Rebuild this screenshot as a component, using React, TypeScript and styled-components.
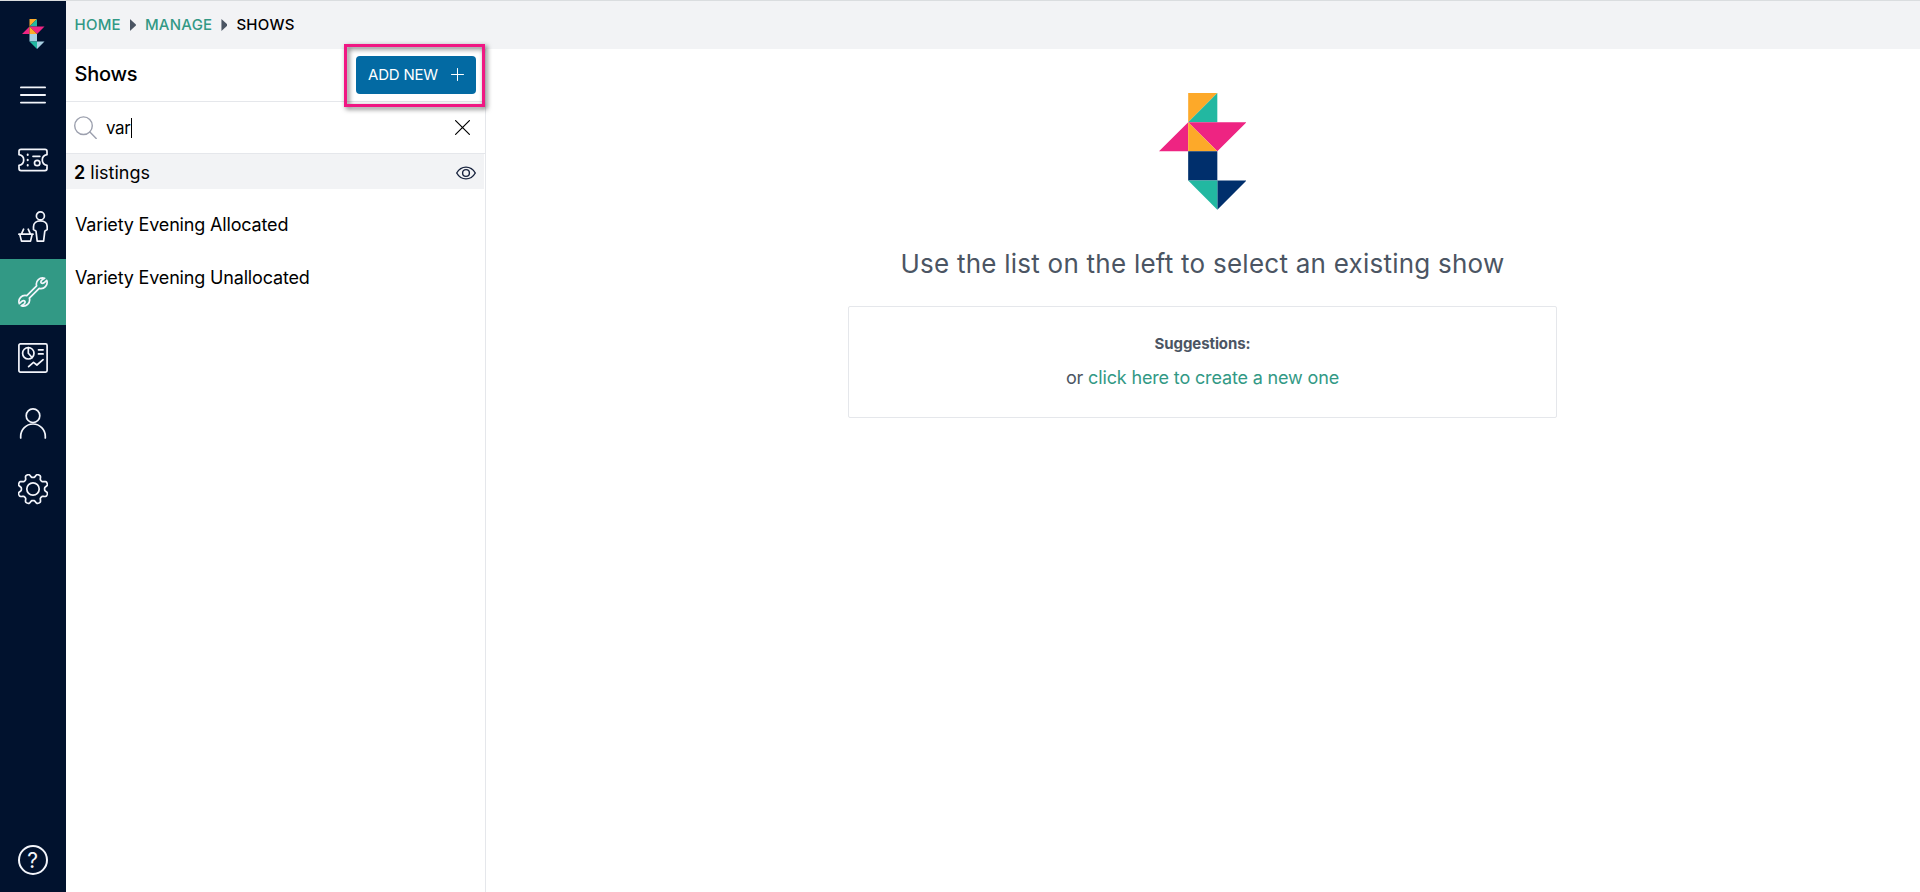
import React from "react";
import styled, { createGlobalStyle } from "styled-components";

const color = {
  navy: "#01122e",
  teal: "#329985",
  blue: "#036aa3",
  pink: "#f01783",
  grey: "#f2f3f5",
  line: "#e5e7eb",
  slate: "#4b5563",
};

const GlobalStyle = createGlobalStyle`
  *, *::before, *::after { box-sizing: border-box; }
  body {
    margin: 0;
    background: #fff;
    color: #000;
    font-family: "Inter", sans-serif;
    font-size: 18px;
    font-weight: 400;
  }
  svg { display: block; flex: none; }
`;

const Page = styled.div`
  display: flex;
  height: 100vh;
  min-height: 600px;
  border-top: 1px solid #dadddf;
  overflow: hidden;
`;

const Sidebar = styled.nav`
  display: flex;
  flex-direction: column;
  flex: none;
  width: 66px;
  background: ${color.navy};
`;

const Brand = styled.a`
  display: flex;
  justify-content: center;
  height: 60px;
  padding: 18px 0 0 1px;
`;

const NavItem = styled.a<{ $active?: boolean }>`
  display: flex;
  align-items: center;
  justify-content: center;
  height: 66px;
  flex: none;
  color: #f3f5fb;
  background: ${(p) => (p.$active ? color.teal : "transparent")};
`;

const MenuItem = styled(NavItem)`
  padding-top: 2px;
`;

const HelpItem = styled(NavItem)`
  height: 64px;
  margin-top: auto;
`;

const HelpMark = styled.span`
  display: flex;
  align-items: center;
  justify-content: center;
  width: 30px;
  height: 30px;
  margin-right: 1px;
  border: 2px solid currentColor;
  border-radius: 50%;
  font-size: 21px;
  font-weight: 400;
  line-height: 1;
`;

const Body = styled.div`
  display: flex;
  flex-direction: column;
  flex: 1;
`;

const Breadcrumbs = styled.header`
  display: flex;
  align-items: center;
  flex: none;
  height: 48px;
  padding: 0 0 2px 8.5px;
  background: ${color.grey};
  font-size: 15px;
  font-weight: 500;
  letter-spacing: 0.25px;
`;

const Crumb = styled.a<{ $link?: boolean }>`
  color: ${(p) => (p.$link ? color.teal : "#000")};
`;

const Arrow = styled.span`
  width: 6px;
  height: 12px;
  margin: 2px 9px 0 9px;
  background: ${color.slate};
  clip-path: polygon(0 0, 100% 45%, 100% 55%, 0 100%);
`;

const Columns = styled.div`
  display: flex;
  flex: 1;
`;

const Panel = styled.aside`
  width: 420px;
  flex: none;
  border-right: 1px solid ${color.line};
`;

const PanelHeader = styled.div`
  display: flex;
  align-items: center;
  justify-content: space-between;
  height: 53px;
  padding: 0 9px 0 8.5px;
  border-bottom: 1px solid ${color.line};
`;

const Title = styled.h1`
  margin: 0;
  padding-bottom: 3px;
  font-size: 20px;
  font-weight: 500;
  letter-spacing: -0.25px;
`;

const ButtonWrap = styled.div`
  position: relative;
`;

const AddButton = styled.button`
  display: flex;
  align-items: center;
  justify-content: space-between;
  width: 120px;
  height: 38px;
  padding: 0 12px 1px;
  border: 0;
  border-radius: 4px;
  background: ${color.blue};
  color: #fff;
  font-family: inherit;
  font-size: 15px;
  font-weight: 400;
  letter-spacing: -0.2px;
  white-space: nowrap;
`;

const Highlight = styled.div`
  position: absolute;
  inset: -12px -9px -13px -12px;
  border: 3px solid ${color.pink};
  filter: drop-shadow(2px 2px 2.5px rgba(0, 0, 0, 0.6));
  pointer-events: none;
`;

const SearchRow = styled.label`
  display: flex;
  align-items: center;
  height: 52px;
  padding: 0 15px 0 8px;
  border-bottom: 1px solid ${color.line};
`;

const Query = styled.span`
  display: flex;
  align-items: center;
  flex: 1;
  margin-left: 9px;
  font-size: 17px;
  letter-spacing: -0.4px;
`;

const Caret = styled.span`
  width: 1px;
  height: 20px;
  margin-left: 1px;
  background: #000;
`;

const CountRow = styled.div`
  display: flex;
  align-items: center;
  justify-content: space-between;
  height: 35px;
  margin-right: 1px;
  padding: 2px 8px 0 8px;
  background: ${color.grey};

  b {
    font-weight: 600;
  }
`;

const Listings = styled.ul`
  margin: 9px 0 0;
  padding: 0;
  list-style: none;
`;

const Listing = styled.li`
  display: flex;
  align-items: center;
  height: 53px;
  padding-left: 9px;
  letter-spacing: -0.17px;
`;

const Main = styled.main`
  display: flex;
  flex-direction: column;
  align-items: center;
  flex: 1;
  padding: 44px 1px 0 0;
  color: ${color.slate};
`;

const Prompt = styled.h2`
  margin: 38px 0 0;
  font-size: 26px;
  line-height: 32px;
  font-weight: 400;
  letter-spacing: 0.24px;
`;

const Suggestions = styled.section`
  display: flex;
  flex-direction: column;
  align-items: center;
  width: 709px;
  height: 112px;
  margin-top: 26px;
  padding-top: 25px;
  border: 1px solid ${color.line};
  border-radius: 2px;
`;

const SuggestionsTitle = styled.strong`
  font-size: 15px;
  line-height: 24px;
  font-weight: 700;
  letter-spacing: -0.08px;
`;

const Suggestion = styled.p`
  margin: 10px 0 0;
  line-height: 24px;
  letter-spacing: -0.15px;

  a {
    color: ${color.teal};
  }
`;

function Logo({ width, base }: { width: number; base: string }) {
  return (
    <svg width={width} height={(width * 4) / 3} viewBox="0 0 3 4">
      <path d="M1 0h1L1 1z" fill="#fda929" />
      <path d="M2 0v1H1z" fill="#22b8a1" />
      <path d="M1 1v1H0zM1 1h2L2 2z" fill="#ee2482" />
      <path d="M1 1l1 1H1z" fill="#fda929" />
      <path d="M1 2h1v1H1zM2 3h1L2 4z" fill={base} />
      <path d="M1 3h1v1z" fill="#22b8a1" />
    </svg>
  );
}

type IconProps = {
  w: number;
  h: number;
  stroke?: number;
  tint?: string;
  children: React.ReactNode;
};

function Icon({ w, h, stroke = 1.7, tint = "currentColor", children }: IconProps) {
  return (
    <svg
      width={w}
      height={h}
      viewBox={`0 0 ${w} ${h}`}
      fill="none"
      stroke={tint}
      strokeWidth={stroke}
      strokeLinejoin="round"
      strokeLinecap="round"
    >
      {children}
    </svg>
  );
}

// Eight rounded teeth, with a valley on each axis.
const gearOutline =
  Array.from({ length: 144 }, (_, i) => {
    const a = (i / 144) * Math.PI * 2;
    const wave = Math.tanh(2 * Math.cos(8 * a)) / Math.tanh(2);
    const r = 13.4 - 1.8 * wave;
    return `${i ? "L" : "M"}${(15 + r * Math.cos(a)).toFixed(2)} ${(15 + r * Math.sin(a)).toFixed(2)}`;
  }).join("") + "Z";

export default function App() {
  return (
    <>
      <GlobalStyle />
      <Page>
        <Sidebar>
          <Brand>
            <Logo width={22.5} base="#a8cfe2" />
          </Brand>
          <MenuItem>
            <Icon w={26} h={18} stroke={1.8}>
              <path d="M.9 1.4h24.2M.9 9h24.2M.9 16.6h24.2" />
            </Icon>
          </MenuItem>
          <NavItem>
            <Icon w={30} h={24}>
              <path d="M3 1.400h24a2 2 0 0 1 2 2v3.300c-3 .5-4.700 2.500-4.700 5.300s1.700 4.800 4.700 5.300v3.300a2 2 0 0 1-2 2H3a2 2 0 0 1-2-2v-3.300c3-.5 4.700-2.500 4.700-5.300S4 7.200 1 6.700V3.400a2 2 0 0 1 2-2z" />
              <path d="M9.700 6.500v.6M9.700 11.700v.6M9.700 16.900v.6" strokeWidth="2" />
              <path d="M15 8.300h6.800" />
              <circle cx="19.200" cy="15" r="2.700" />
            </Icon>
          </NavItem>
          <NavItem>
            <Icon w={30} h={31}>
              <circle cx="22.400" cy="4.900" r="4" />
              <path d="M19.200 30.100l-1.200-10-2.500-1.600v-2.700c0-3.800 3-5.900 6.900-5.900s6.800 2.100 6.800 5.900v2.700l-2.400 1.600-1.200 10z" />
              <path d="M.9 23.200H15M1.800 23.400l1.700 6.700h9l1.700-6.700M3.600 22.600l2-4.400M12.200 22.600l-2-4.400" />
            </Icon>
          </NavItem>
          <NavItem $active>
            <Icon w={30} h={30}>
              <path d="M26.700 1.300A6.200 6.200 0 0 0 18.600 8.800L8.800 18.600A6.200 6.200 0 0 0 1.300 26.700L4 24.200q1.700-1 2.800 0 .9 1.200-.9 2.900L3.300 28.700A6.200 6.200 0 0 0 11.400 21.200L21.200 11.400A6.200 6.200 0 0 0 28.700 3.300L26 5.800q-1.700 1-2.800 0-.9-1.200.9-2.900z" />
            </Icon>
          </NavItem>
          <NavItem>
            <Icon w={30} h={30}>
              <rect x=".9" y=".9" width="28.200" height="28.200" rx="1.500" />
              <circle cx="10.300" cy="10.300" r="5.700" />
              <path d="M10.300 4.600v5.700l3.800 4.200M20.500 6.800h4.600M20.500 10.900h4.600M10.600 23.700l4.900-4.400 3.400 2.700 6.200-5.300" />
            </Icon>
          </NavItem>
          <NavItem>
            <Icon w={30} h={32}>
              <circle cx="15" cy="7.700" r="6.800" />
              <path d="M2.700 30v-1.700a12.300 12.300 0 0 1 24.600 0v1.700" />
            </Icon>
          </NavItem>
          <NavItem>
            <Icon w={30} h={32}>
              <path d={gearOutline} />
              <circle cx="15" cy="15" r="6.200" />
            </Icon>
          </NavItem>
          <HelpItem>
            <HelpMark>?</HelpMark>
          </HelpItem>
        </Sidebar>

        <Body>
          <Breadcrumbs>
            <Crumb $link>HOME</Crumb>
            <Arrow />
            <Crumb $link>MANAGE</Crumb>
            <Arrow />
            <Crumb>SHOWS</Crumb>
          </Breadcrumbs>
          <Columns>
            <Panel>
              <PanelHeader>
                <Title>Shows</Title>
                <ButtonWrap>
                  <AddButton>
                    ADD NEW
                    <Icon w={13} h={13} stroke={1}>
                      <path d="M.5 6.500h12M6.500.5v12" />
                    </Icon>
                  </AddButton>
                  <Highlight />
                </ButtonWrap>
              </PanelHeader>
              <SearchRow>
                <Icon w={23} h={23} stroke={1.4} tint="#9ca0ae">
                  <circle cx="9.500" cy="9.700" r="8.800" />
                  <path d="M15.900 16.100l6.300 6.300" />
                </Icon>
                <Query>
                  var
                  <Caret />
                </Query>
                <Icon w={15} h={15} stroke={1.2} tint="#000">
                  <path d="M.6.600l13.800 13.800M14.400.600L.6 14.400" />
                </Icon>
              </SearchRow>
              <CountRow>
                <span>
                  <b>2</b> listings
                </span>
                <Icon w={20} h={14} stroke={1.4} tint="#17223d">
                  <path d="M.7 7C3 3 6.300 1.100 10 1.100S17 3 19.300 7C17 11 13.700 12.900 10 12.900S3 11 .7 7z" />
                  <circle cx="10" cy="7" r="3.400" />
                </Icon>
              </CountRow>
              <Listings>
                <Listing>Variety Evening Allocated</Listing>
                <Listing>Variety Evening Unallocated</Listing>
              </Listings>
            </Panel>
            <Main>
              <Logo width={87.5} base="#002f6c" />
              <Prompt>Use the list on the left to select an existing show</Prompt>
              <Suggestions>
                <SuggestionsTitle>Suggestions:</SuggestionsTitle>
                <Suggestion>
                  or <a>click here to create a new one</a>
                </Suggestion>
              </Suggestions>
            </Main>
          </Columns>
        </Body>
      </Page>
    </>
  );
}
